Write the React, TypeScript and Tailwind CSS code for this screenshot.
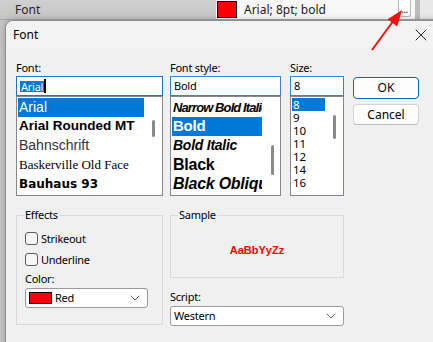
import { ChevronDown, X } from "lucide-react";

const fontItems = [
  { name: "Arial", cls: "font-['Liberation_Sans',sans-serif] text-[14px]", selected: true },
  { name: "Arial Rounded MT", cls: "font-['Liberation_Sans',sans-serif] text-[13.5px] font-bold" },
  { name: "Bahnschrift", cls: "font-['Liberation_Sans',sans-serif] text-[14px] text-[#333]" },
  { name: "Baskerville Old Face", cls: "font-['Liberation_Serif',serif] text-[13px]" },
  { name: "Bauhaus 93", cls: "font-['DejaVu_Sans',sans-serif] text-[12px] font-bold tracking-[-0.3px]" },
];

const styleItems = [
  { name: "Narrow Bold Italic", cls: "font-['Liberation_Sans',sans-serif] text-[13px] font-bold italic tracking-[-0.9px]" },
  { name: "Bold", cls: "font-['Liberation_Sans',sans-serif] text-[15px] font-bold", selected: true },
  { name: "Bold Italic", cls: "font-['Liberation_Sans',sans-serif] text-[14px] font-bold italic" },
  { name: "Black", cls: "font-['Liberation_Sans',sans-serif] text-[16px] font-bold" },
  { name: "Black Oblique", cls: "font-['Liberation_Sans',sans-serif] text-[16px] font-bold italic" },
];

const sizes = ["8", "9", "10", "11", "12", "14", "16"];

function Thumb({ cls }: { cls: string }) {
  return <div className={`w-[3px] rounded-full bg-[#8a8a8a] ${cls}`} />;
}

function Checkbox({ label }: { label: string }) {
  return (
    <div className="flex items-center h-[13px] ml-[1px]">
      <div className="w-[13px] h-[13px] rounded-[3px] border border-[#5c5c5c] bg-[#f7f7f7]" />
      <span className="ml-[3px] leading-[14px]">{label}</span>
    </div>
  );
}

export default function App() {
  return (
    <div className="relative w-[433px] h-[342px] overflow-hidden bg-[#c6c6c6] font-['Noto_Sans',sans-serif] text-[11px] tracking-[-0.25px] text-black">
      {/* property grid behind */}
      <div className="flex h-[20px] border-b border-[#a8a8a8]">
        <div className="w-[216px] bg-gradient-to-b from-[#d0d0d0] to-[#c5c5c5] pl-[15px] text-[12px] leading-[19px] text-[#2a1f33] tracking-normal">
          Font
        </div>
        <div className="w-[199px] bg-[#f8f8f8] flex items-start">
          <div className="ml-[1px] mt-[1px] w-[20px] h-[17px] bg-[#ff0000] border border-black" />
          <span className="ml-[7px] text-[12px] leading-[19px] tracking-normal text-[#1a1a1a]">Arial; 8pt; bold</span>
          <div className="ml-auto mr-[4px] w-[13px] h-[17px] rounded-b-[3px] border border-t-0 border-[#b5b5b5] bg-white flex items-end justify-center pb-[3px] text-[10px] leading-[8px] tracking-[-0.5px] text-[#222]">
            ...
          </div>
        </div>
        <div className="w-[5px] bg-[#bcbcbc]" />
        <div className="flex-1 bg-[#e8e8e8]" />
      </div>

      {/* dialog */}
      <div className="absolute left-[5px] top-[20px] w-[440px] h-[330px] rounded-tl-[8px] border border-[#8f8f8f] bg-[#f0f0f0] shadow-[0_0_6px_rgba(0,0,0,0.25)]">
        <div className="flex items-center h-[28px] rounded-tl-[8px] bg-[#f3f3f3]">
          <span className="pl-[7px] text-[12px] tracking-normal">Font</span>
          <div className="ml-auto w-[46px] h-[28px] flex items-center justify-center">
            <X size={20} strokeWidth={1.1} color="#1a1a1a" />
          </div>
        </div>

        <div className="pl-[10px] pt-[12px]">
          {/* top row */}
          <div className="flex">
            <div className="w-[147px]">
              <div className="h-[15px] leading-[14px]">Font:</div>
              <div className="h-[20px] border border-[#1f73c9] bg-white flex items-center pl-[3px]">
                <span className="bg-[#0078d7] text-white leading-[11px] px-[1px]">Arial</span>
                <span className="w-[2px] h-[14px] bg-black" />
              </div>
              <div className="h-[100px] border border-[#828790] bg-white flex p-[1px] pr-0">
                <div className="w-[126px]">
                  {fontItems.map((f) => (
                    <div
                      key={f.name}
                      className={`h-[19px] flex items-center pl-[1px] whitespace-nowrap overflow-hidden tracking-normal ${f.cls} ${f.selected ? "bg-[#0078d7] text-white" : ""}`}
                    >
                      {f.name}
                    </div>
                  ))}
                </div>
                <div className="w-[18px] pl-[8px] pt-[22px]">
                  <Thumb cls="h-[17px]" />
                </div>
              </div>
            </div>

            <div className="w-[111px] ml-[7px]">
              <div className="h-[15px] leading-[14px]">Font style:</div>
              <div className="h-[20px] border border-[#3a83cf] bg-white flex items-center pl-[3px]">Bold</div>
              <div className="h-[100px] border border-[#828790] bg-white flex p-[1px] pr-0">
                <div className="w-[90px]">
                  {styleItems.map((s) => (
                    <div
                      key={s.name}
                      className={`h-[19px] flex items-center pl-[1px] whitespace-nowrap overflow-hidden ${s.cls} ${s.selected ? "bg-[#0078d7] text-white" : ""}`}
                    >
                      {s.name}
                    </div>
                  ))}
                </div>
                <div className="w-[18px] pl-[9px] pt-[47px]">
                  <Thumb cls="h-[30px]" />
                </div>
              </div>
            </div>

            <div className="w-[54px] ml-[9px]">
              <div className="h-[15px] leading-[14px]">Size:</div>
              <div className="h-[20px] border border-[#3a83cf] bg-white flex items-center pl-[3px]">8</div>
              <div className="h-[100px] border border-[#828790] bg-white flex p-[1px] pr-0">
                <div className="w-[33px]">
                  {sizes.map((s, i) => (
                    <div
                      key={s}
                      className={`h-[13px] pl-[1px] text-[11.5px] leading-[13px] tracking-normal ${i === 0 ? "bg-[#0078d7] text-white" : ""}`}
                    >
                      {s}
                    </div>
                  ))}
                </div>
                <div className="w-[18px] pl-[8px] pt-[17px]">
                  <Thumb cls="h-[24px]" />
                </div>
              </div>
            </div>

            <div className="w-[66px] ml-[9px] pt-[16px] flex flex-col gap-[5px]">
              <div className="h-[22px] rounded-[4px] border border-[#0067c0] bg-[#fdfdfd] flex items-center justify-center text-[12px] tracking-normal">
                OK
              </div>
              <div className="h-[21px] rounded-[4px] border border-[#d3d3d3] border-b-[#bdbdbd] bg-[#fdfdfd] flex items-center justify-center text-[12px] tracking-normal">
                Cancel
              </div>
            </div>
          </div>

          {/* bottom row */}
          <div className="flex mt-[12px]">
            <fieldset className="w-[147px] h-[117px] border border-[#dadada] pl-[7px]">
              <legend className="px-[1px] leading-[14px]">Effects</legend>
              <div className="flex flex-col mt-[10px]">
                <Checkbox label="Strikeout" />
                <div className="h-[8px]" />
                <Checkbox label="Underline" />
                <div className="mt-[6px] ml-[1px] h-[14px] leading-[14px]">Color:</div>
                <div className="mt-[2px] ml-[1px] w-[123px] h-[20px] rounded-[3px] border border-[#9a9a9a] bg-white flex items-center pl-[3px] pr-[4px]">
                  <div className="w-[23px] h-[12px] bg-[#ff0000] border border-black" />
                  <span className="ml-[3px]">Red</span>
                  <ChevronDown size={16} strokeWidth={1.5} color="#606060" className="ml-auto" />
                </div>
              </div>
            </fieldset>

            <div className="w-[174px] ml-[7px]">
              <fieldset className="h-[70px] border border-[#dadada] pl-[7px]">
                <legend className="px-[1px] leading-[14px]">Sample</legend>
                <div className="h-[56px] flex items-center justify-center pr-[7px]">
                  <span className="font-['Liberation_Sans',sans-serif] font-bold text-[11px] tracking-normal text-[#ff0000]">
                    AaBbYyZz
                  </span>
                </div>
              </fieldset>
              <div className="mt-[12px] h-[15px] leading-[14px]">Script:</div>
              <div className="mt-[1px] h-[20px] rounded-[3px] border border-[#9a9a9a] bg-white flex items-center pl-[3px] pr-[4px]">
                <span>Western</span>
                <ChevronDown size={16} strokeWidth={1.5} color="#606060" className="ml-auto" />
              </div>
            </div>
          </div>
        </div>
      </div>

      {/* red arrow annotation */}
      <svg className="absolute left-0 top-0" width="433" height="342" viewBox="0 0 433 342">
        <line x1="372" y1="50" x2="394" y2="20" stroke="#f01010" strokeWidth="2" />
        <polygon points="402,10 397.2,26.4 387.6,19.2" fill="#f01010" />
      </svg>
    </div>
  );
}
